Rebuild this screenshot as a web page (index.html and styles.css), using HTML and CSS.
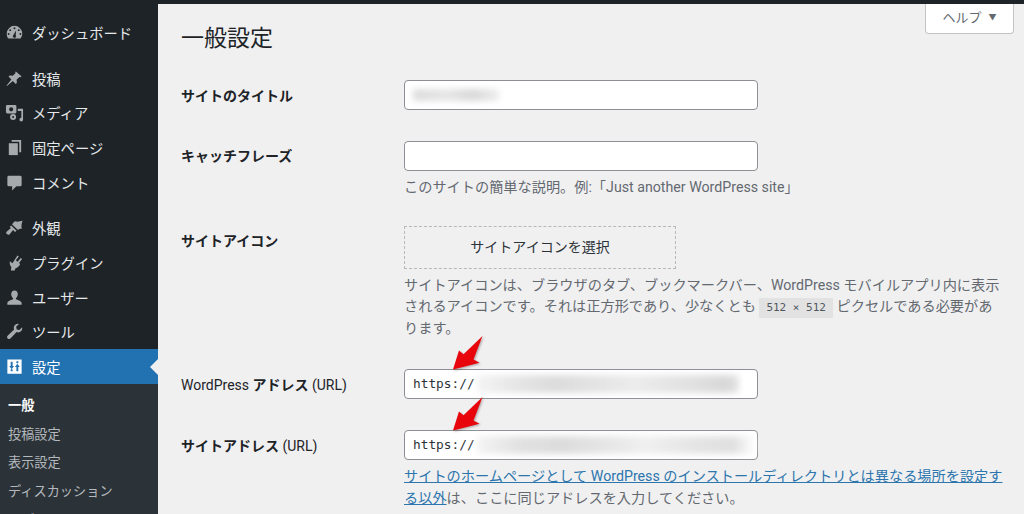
FILE: index.html
```html
<!DOCTYPE html>
<html lang="ja">
<head>
<meta charset="utf-8">
<title>一般設定</title>
<link rel="stylesheet" href="styles.css">
</head>
<body>
<div class="topbar"></div>
<div class="app">
  <aside class="sidebar">
    <ul class="menu first">
      <li class="item"><svg class="icon" viewBox="0 0 20 20"><path d="M10 3a8.2 8.2 0 0 0-8.2 8.2c0 2 .7 3.8 1.900 5.200h12.600a8.200 8.200 0 0 0 1.900-5.200A8.200 8.200 0 0 0 10 3zM10 4.600a1 1 0 1 1 0 2 1 1 0 0 1 0-2zM5.500 6.500a1 1 0 1 1 0 2 1 1 0 0 1 0-2zM14.500 6.500a1 1 0 1 1 0 2 1 1 0 0 1 0-2zM3.800 10.500a1 1 0 1 1 0 2 1 1 0 0 1 0-2zM16.200 10.500a1 1 0 1 1 0 2 1 1 0 0 1 0-2zM11.800 7.500l-.6 5.200a1.700 1.700 0 1 1-2.400 0z" fill-rule="evenodd"/></svg><span>ダッシュボード</span></li>
    </ul>
    <ul class="menu">
      <li class="item"><svg class="icon" viewBox="0 0 20 20"><path d="M11.500 2.500l6 5.500-1.300.8-1-.5-3 3 .3 3.200-1.200 1.200-3-3.200L2 18l-.5-.5 5.200-6.500-3-3L5 6.800l3.200.4 3-3-.5-1z"/></svg><span>投稿</span></li>
      <li class="item"><svg class="icon" viewBox="0 0 20 20"><path fill-rule="evenodd" d="M2.500 2h8a1.500 1.500 0 0 1 1.500 1.500v6a1.500 1.500 0 0 1-1.500 1.500h-8A1.500 1.500 0 0 1 1 9.500v-6A1.500 1.500 0 0 1 2.500 2zM6.500 4.500a2.200 2.200 0 1 0 0 4.400 2.200 2.200 0 0 0 0-4.400z"/><path fill-rule="evenodd" d="M8.500 11.500a3.200 3.200 0 1 1 0 6.400 3.200 3.200 0 0 1 0-6.400zM8.500 13.700a1 1 0 1 0 0 2 1 1 0 0 0 0-2z"/><path d="M13.500 6H19v11.500a1.900 1.900 0 1 1-1.800-1.900V8.500h-3.700z"/></svg><span>メディア</span></li>
      <li class="item"><svg class="icon" viewBox="0 0 20 20"><path d="M7 2h10v13h-2V5a1 1 0 0 0-1-1H7z"/><path d="M4 5.500h9.500V18H4z"/></svg><span>固定ページ</span></li>
      <li class="item"><svg class="icon" viewBox="0 0 20 20"><path d="M4 3h12a1.500 1.500 0 0 1 1.500 1.500v8A1.500 1.500 0 0 1 16 14h-4l-4.500 4.500V14H4a1.500 1.500 0 0 1-1.500-1.500v-8A1.500 1.500 0 0 1 4 3z"/></svg><span>コメント</span></li>
    </ul>
    <ul class="menu">
      <li class="item"><svg class="icon" viewBox="0 0 20 20"><path d="M10.500 3.500c2.500.6 5 .3 8-.5-1 3-1.600 5.500-.8 8.500-1.700-.5-3 .2-4 1L7.500 6.800c.8-1.200 1.500-2.500 3-3.300zM6.500 7.800l5.700 5.700-1.700 1.200-2-2-3.800 4.600c-.8.900-2 .2-2.800-.5-.7-.8-.9-1.700-.2-2.400L6.200 10.500 5 9.300z"/></svg><span>外観</span></li>
      <li class="item"><svg class="icon" viewBox="0 0 20 20"><path d="M13.100 2.500l1.500 1.200-3.200 3.900 1.900 1.500L16.500 5.200 18 6.400l-3.300 4.100 1.300 1c-1 2.500-2.800 4-5 4.500l-.8 2.500-4-.2.500-3.500c-1.700-1.500-2-3.800-1.500-6l2.600 2.100z"/></svg><span>プラグイン</span></li>
      <li class="item"><svg class="icon" viewBox="0 0 20 20"><path d="M10 2.500c2.200 0 3.500 1.700 3.500 3.900 0 2-1 3.500-2 4.300v1.100c2.500 1 5.800 1.900 6 3.800v2H2.500v-2c.2-1.900 3.500-2.800 6-3.800v-1.100c-1-.8-2-2.300-2-4.300 0-2.200 1.300-3.900 3.500-3.900z"/></svg><span>ユーザー</span></li>
      <li class="item"><svg class="icon" viewBox="0 0 20 20"><path d="M18 5.500c.5 2.200-.5 4.300-2.500 5.100-1.200.5-2.300.4-3.300 0L6 17.200c-1 1-2.300 1-3.200.1-.9-1-.8-2.200.2-3.200l6.600-6.200c-.4-1-.5-2.100 0-3.300.8-2 3-3 5.100-2.500l-3 3 .7 2.700 2.700.7z"/></svg><span>ツール</span></li>
      <li class="item active">
        <svg class="icon" viewBox="0 0 20 20"><path d="M2.500 2.500h15v15h-15zM6 5v4.500H4.500L7 13l2.500-3.500H8V5zM6 12.800V15h2v-2.200zM12 15h2v-4.500h1.500L13 7l-2.500 3.500H12zM12 4.500v2h2v-2z" fill-rule="evenodd"/></svg><span>設定</span>
      </li>
    </ul>
    <ul class="submenu">
      <li class="sub current">一般</li>
      <li class="sub">投稿設定</li>
      <li class="sub">表示設定</li>
      <li class="sub">ディスカッション</li>
      <li class="sub">メディア</li>
    </ul>
  </aside>
  <main class="content">
    <div class="help">ヘルプ<span class="caret">▼</span></div>
    <h1 class="title">一般設定</h1>
    <section class="row row-title">
      <div class="label">サイトのタイトル</div>
      <div class="cell">
        <div class="field"><span class="smudge smudge-title"></span></div>
      </div>
    </section>
    <section class="row row-tag">
      <div class="label">キャッチフレーズ</div>
      <div class="cell">
        <div class="field"></div>
        <p class="desc">このサイトの簡単な説明。例:「Just another WordPress site」</p>
      </div>
    </section>
    <section class="row row-icon">
      <div class="label">サイトアイコン</div>
      <div class="cell">
        <div class="icon-button">サイトアイコンを選択</div>
        <p class="desc">サイトアイコンは、ブラウザのタブ、ブックマークバー、WordPress モバイルアプリ内に表示されるアイコンです。それは正方形であり、少なくとも <code class="size">512 × 512</code> ピクセルである必要があります。</p>
      </div>
    </section>
    <section class="row row-wp">
      <div class="label label-mixed">WordPress <b>アドレス</b> (URL)</div>
      <div class="cell">
        <div class="field mono">https://<span class="smudge smudge-url"></span>
          <svg class="arrow" viewBox="0 0 32 36"><path d="M1 34.500 7 15.500l4.500 3.800L30.500 1 21.500 24.500l6 3.200z"/></svg>
        </div>
      </div>
    </section>
    <section class="row row-site">
      <div class="label label-mixed"><b>サイトアドレス</b> (URL)</div>
      <div class="cell">
        <div class="field mono">https://<span class="smudge smudge-url wide"></span>
          <svg class="arrow" viewBox="0 0 32 36"><path d="M1 34.500 7 15.500l4.500 3.800L30.500 1 21.500 24.500l6 3.200z"/></svg>
        </div>
        <p class="desc"><a class="link" href="#">サイトのホームページとして WordPress のインストールディレクトリとは異なる場所を設定する以外</a>は、ここに同じアドレスを入力してください。</p>
      </div>
    </section>
  </main>
</div>
</body>
</html>
```
FILE: styles.css
```css
* { box-sizing: border-box; }
html, body { margin: 0; height: 514px; overflow: hidden; }
body {
  background: #f0f0f1;
  color: #3c434a;
  font-family: Roboto, "Noto Sans CJK JP", sans-serif;
  font-size: 14.200px;
}
ul { list-style: none; margin: 0; padding: 0; }
p { margin: 0; }

.topbar { height: 4px; background: #1d2327; }
.app { display: flex; height: 510px; }

.sidebar {
  flex: 0 0 158px;
  background: #1d2327;
  color: #e6e8ea;
  padding-top: 11.300px;
  overflow: hidden;
}
.menu { margin-bottom: 10.800px; }
.menu:nth-child(3) { margin-bottom: 0; }
.item {
  display: flex;
  align-items: center;
  gap: 8px;
  height: 34.700px;
  padding-left: 5px;
  font-size: 14.300px;
  position: relative;
}
.icon { width: 19px; height: 19px; flex: none; fill: #a7aaad; }
.item.active { background: #2271b1; color: #fff; height: 35px; }
.item.active .icon { fill: #fff; }
.item.active::after {
  content: "";
  position: absolute;
  right: 0;
  top: 10px;
  border: 8px solid transparent;
  border-right-color: #f0f0f1;
  border-left-width: 0;
}
.submenu {
  background: #2c3338;
  padding: 8px 0 0 8px;
  color: #b4b9be;
  font-size: 13.200px;
}
.sub { height: 28.700px; line-height: 28.700px; }
.sub.current { color: #fff; font-weight: 700; }

.content { flex: 1; position: relative; padding: 20px 0 0 23px; min-width: 0; }
.help {
  position: absolute;
  top: 0;
  right: 10px;
  width: 89px;
  height: 30px;
  background: #fff;
  border: 1px solid #c3c4c7;
  border-top: 0;
  border-radius: 0 0 4px 4px;
  color: #646970;
  font-size: 13px;
  line-height: 27px;
  text-align: center;
}
.caret { font-size: 8px; margin-left: 7px; vertical-align: 2px; }
.title {
  margin: 0 0 26px;
  height: 30px;
  font-size: 23px;
  font-weight: 400;
  line-height: 30px;
  color: #1d2327;
}

.row { display: grid; grid-template-columns: 223px 600px; }
.row-title { padding-bottom: 31px; }
.row-tag { padding-bottom: 27px; }
.row-icon { padding-bottom: 29px; }
.row-wp { padding-bottom: 31px; }

.label {
  padding-top: 5px;
  font-weight: 700;
  font-size: 14px;
  line-height: 22px;
  color: #1d2327;
}
.label-mixed { font-weight: 400; }
.label-mixed b { font-size: 14px; }
.row-tag .label { padding-top: 4px; }
.row-icon .label { padding-top: 4px; }

.field {
  width: 354px;
  height: 30px;
  background: #fff;
  border: 1px solid #8c8f94;
  border-radius: 4px;
  position: relative;
  overflow: visible;
}
.mono {
  font-family: "DejaVu Sans Mono", "Liberation Mono", monospace;
  font-size: 12.800px;
  line-height: 27px;
  padding-left: 8px;
  color: #2c3338;
}
.smudge {
  position: absolute;
  filter: blur(3px);
  border-radius: 3px;
}
.smudge-title {
  left: 8px;
  top: 8px;
  width: 86px;
  height: 12px;
  background: linear-gradient(90deg, #dcdcdc, #e6e6e6 40%, #d8d8d8 70%, #eee);
}
.smudge-url {
  left: 72px;
  top: 5px;
  width: 262px;
  height: 18px;
  background: linear-gradient(90deg, #f4f4f4, #e6e6e6 15%, #dcdcdc 30%, #e6e6e6 50%, #ececec 60%, #e2e2e2 80%, #d8d8d8 95%, #e4e4e4);
}
.smudge-url.wide {
  width: 278px;
  background: linear-gradient(90deg, #f4f4f4, #e2e2e2 15%, #dcdcdc 30%, #e8e8e8 50%, #f0f0f0 60%, #e4e4e4 80%, #e0e0e0 92%, #fff);
}
.arrow {
  position: absolute;
  left: 46px;
  top: -35px;
  width: 34px;
  height: 36px;
  fill: #e8060c;
  filter: drop-shadow(1px 1px 1px rgba(90, 60, 60, .45));
}

.desc { color: #646970; line-height: 21.700px; margin-top: 6px; width: 600px; }
.icon-button {
  width: 272px;
  height: 43px;
  border: 1px dashed #b4b9be;
  color: #2c3338;
  font-size: 14px;
  line-height: 41px;
  text-align: center;
}
.size {
  display: inline-block;
  font-family: "DejaVu Sans Mono", "Liberation Mono", monospace;
  font-size: 11px;
  line-height: 20px;
  padding: 0 7px;
  background: #e2e2e3;
  color: #50575e;
}
.link { color: #2c75ad; text-decoration: underline; }
```
